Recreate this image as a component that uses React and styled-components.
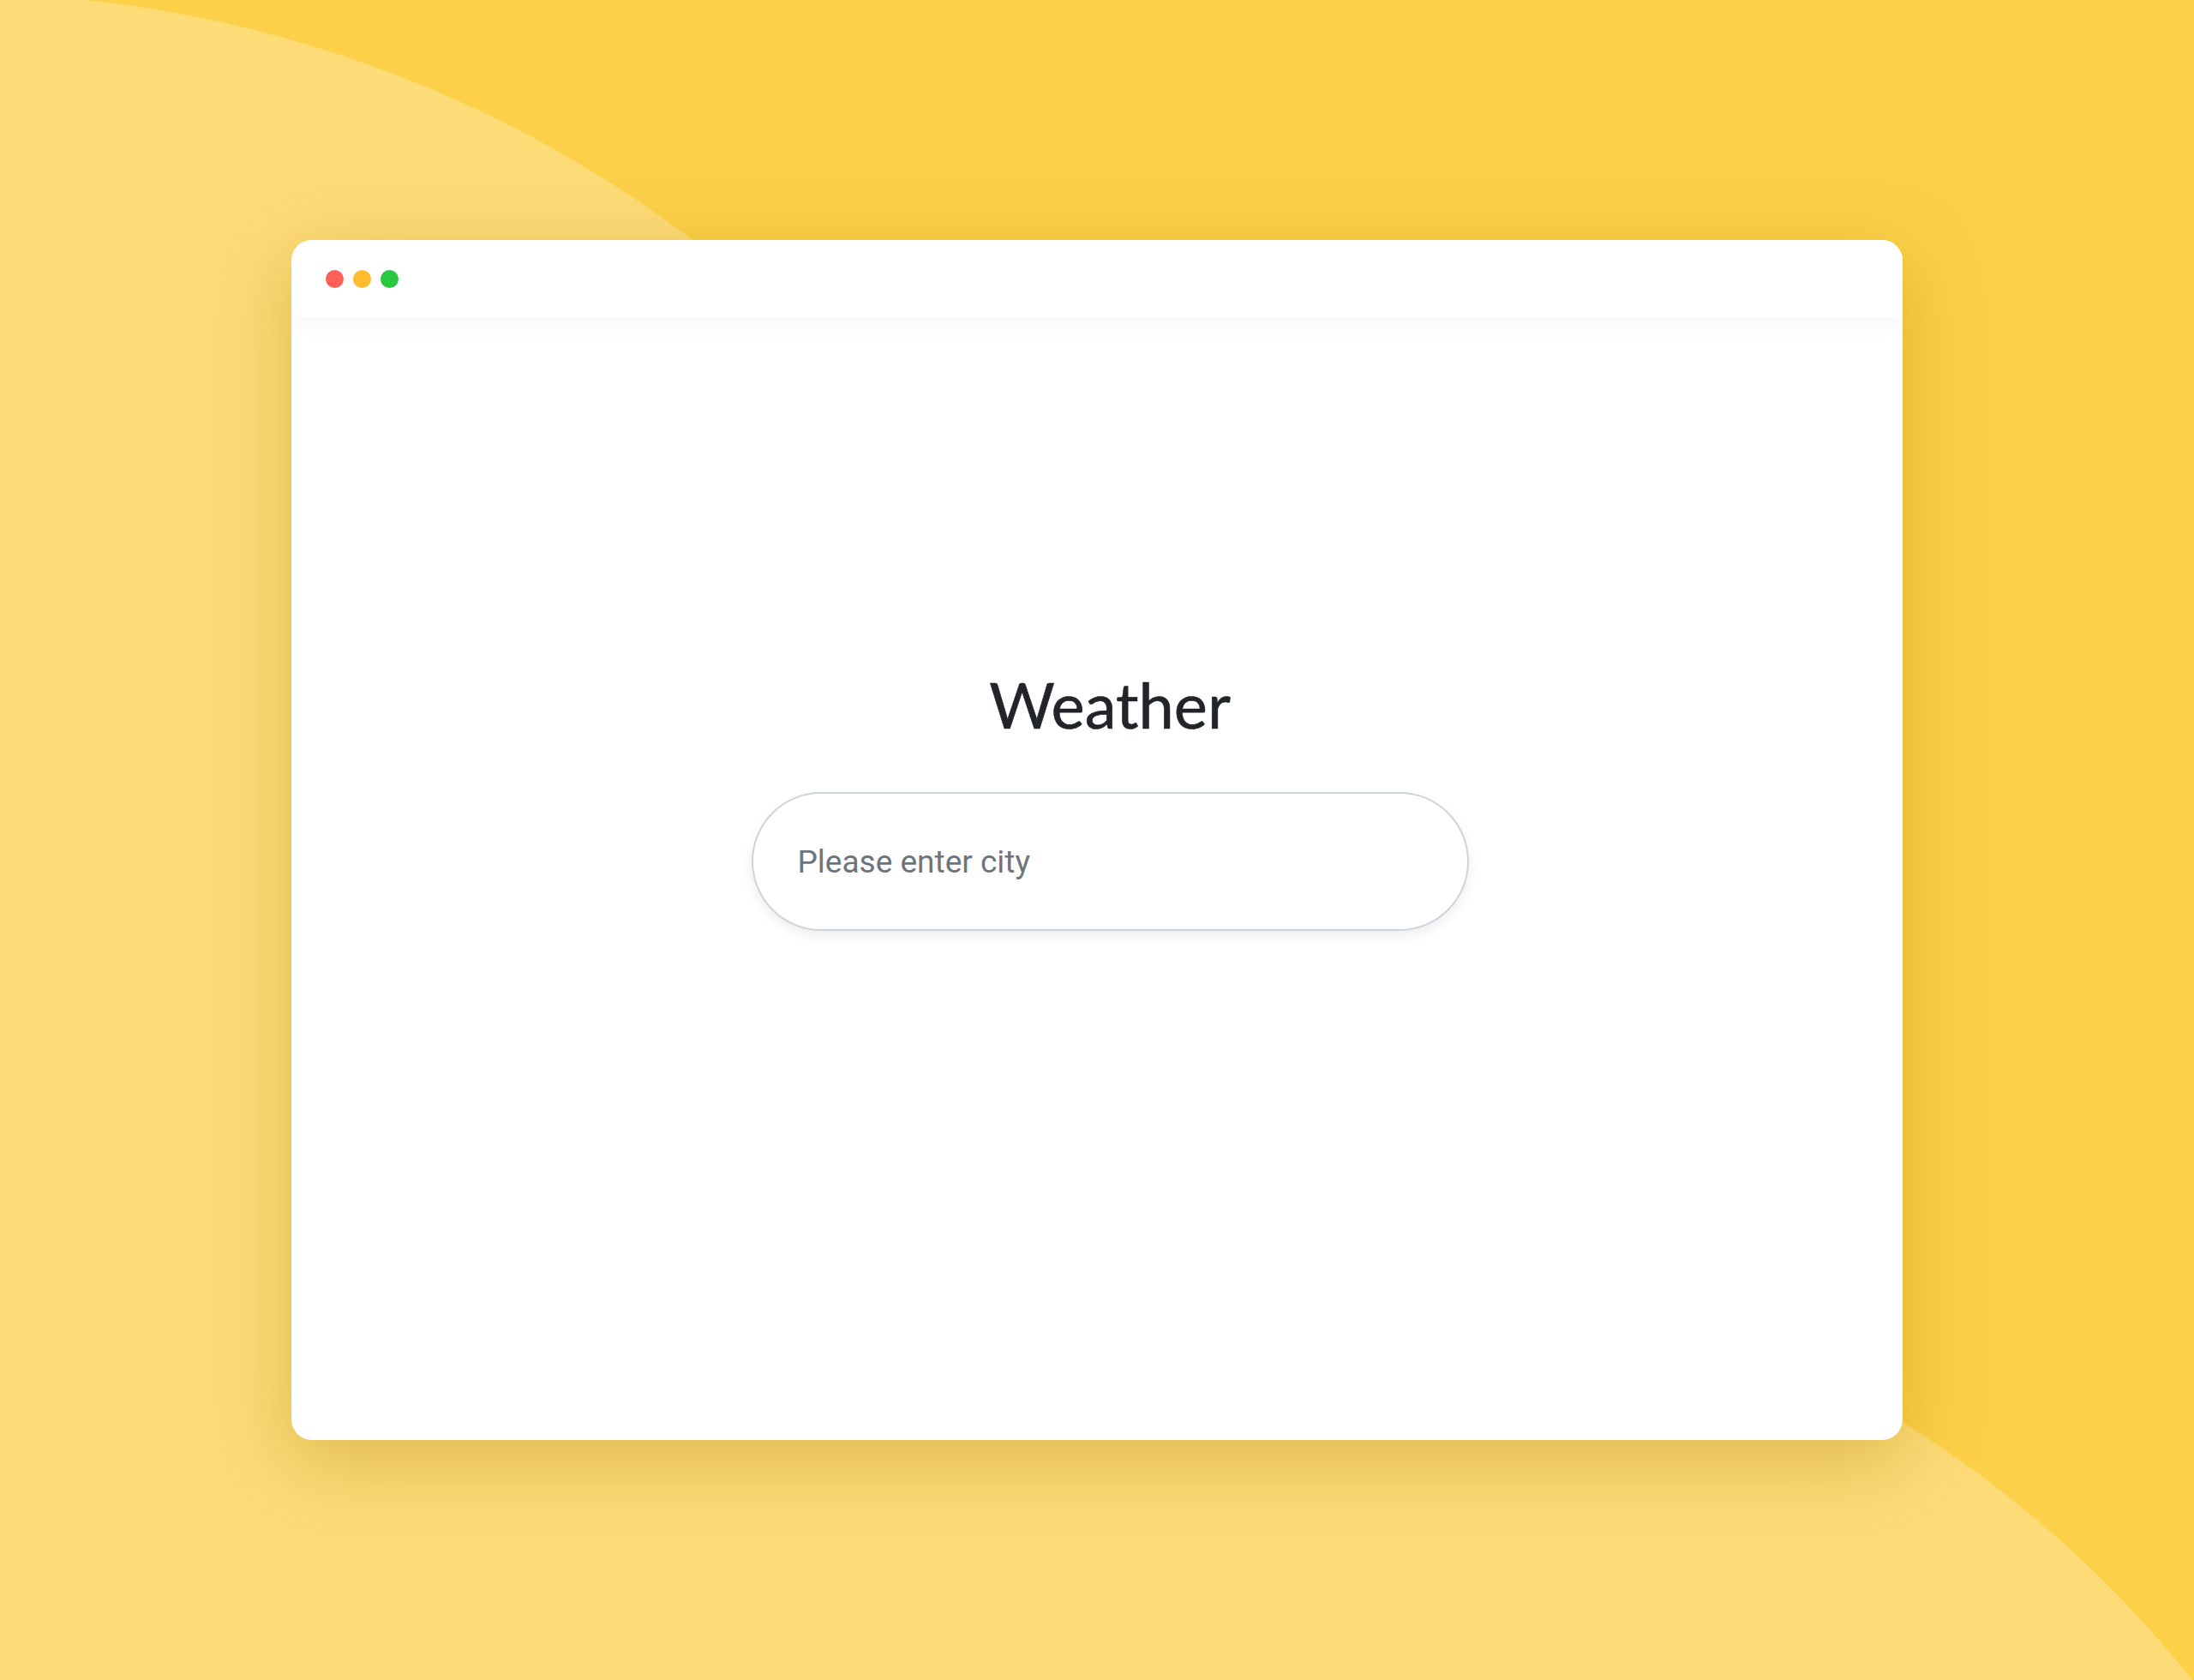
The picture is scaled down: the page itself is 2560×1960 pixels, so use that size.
import React from 'react';
import styled, { createGlobalStyle } from 'styled-components';

const GlobalStyle = createGlobalStyle`
    html, body {
        margin: 0;
        padding: 0;
    }
    body {
        font-family: 'Lato', 'Noto Sans', sans-serif;
    }
`;

const App = () => {
    return (
        <Page>
            <GlobalStyle />
            <BrowserWindow>
                <TitleBar>
                    <Dot color="#fe5f57" />
                    <Dot color="#febc2e" />
                    <Dot color="#28c840" />
                </TitleBar>
                <Content>
                    <Title>Weather</Title>
                    <CityInput type="text" placeholder="Please enter city" />
                </Content>
            </BrowserWindow>
        </Page>
    );
};

export default App;

const Page = styled.div`
    width: 2560px;
    height: 1960px;
    box-sizing: border-box;
    padding: 280px 340px;
    background:
        radial-gradient(circle 1423px at -50px 1415px, #fddb77 1422px, transparent 1424px),
        radial-gradient(circle 1330px at 1518px 2789px, #fddb77 1329px, transparent 1331px),
        #fcd048;
    overflow: hidden;
`;

const BrowserWindow = styled.div`
    width: 1880px;
    height: 1400px;
    background: #fff;
    border-radius: 24px;
    box-shadow: 0 24px 90px rgba(170, 120, 0, 0.35);
    display: flex;
    flex-direction: column;
    overflow: hidden;
`;

const TitleBar = styled.div`
    height: 90px;
    flex-shrink: 0;
    display: flex;
    align-items: center;
    gap: 11px;
    padding-left: 40px;
    background: #fff;
    box-shadow: 0 6px 26px rgba(0, 0, 0, 0.045);
    position: relative;
    z-index: 1;
`;

const Dot = styled.span`
    width: 21px;
    height: 21px;
    border-radius: 50%;
    background: ${(props) => props.color};
`;

const Content = styled.div`
    flex: 1;
    display: flex;
    flex-direction: column;
    align-items: center;
    padding-top: 407px;
    padding-left: 30px;
`;

const Title = styled.h1`
    margin: 0 0 57px;
    font-family: 'Lato', sans-serif;
    font-weight: 400;
    font-size: 74px;
    line-height: 90px;
    color: #212529;
    -webkit-text-stroke: 0.6px #212529;
`;

const CityInput = styled.input`
    width: 837px;
    height: 162px;
    box-sizing: border-box;
    border: 2px solid #ced4da;
    border-radius: 81px;
    padding: 0 52px;
    font-family: 'Roboto', 'Liberation Sans', sans-serif;
    font-size: 37px;
    color: #495057;
    background: #fff;
    box-shadow: 0 6px 14px rgba(0, 0, 0, 0.07);
    outline: none;
    &::placeholder {
        color: #6c757d;
    }
`;
